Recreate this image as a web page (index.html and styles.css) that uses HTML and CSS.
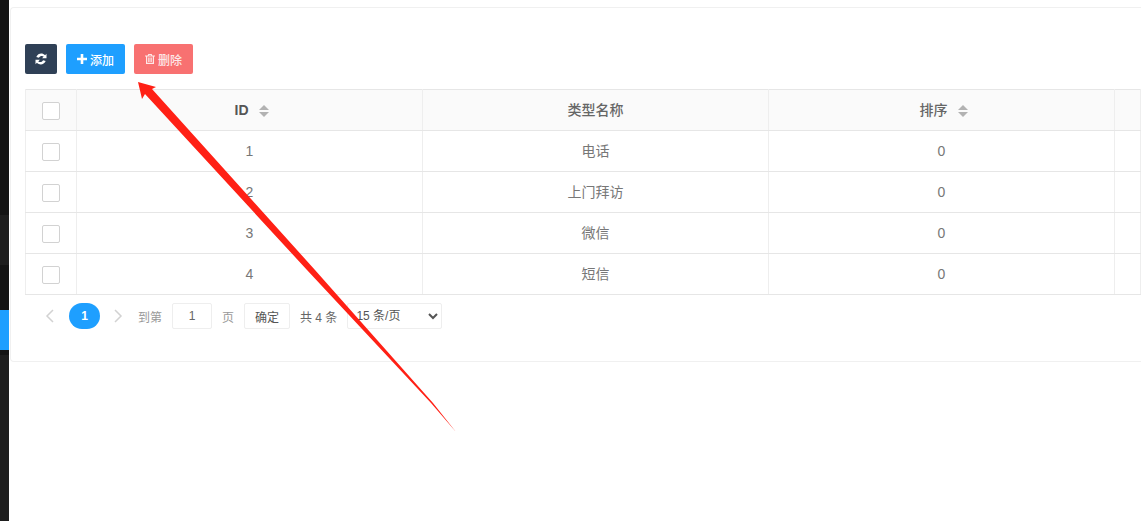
FILE: index.html
```html
<!doctype html>
<html lang="zh-CN">
<head>
  <meta charset="UTF-8" />
  <title>类型管理</title>
  <link rel="stylesheet" href="styles.css">
</head>
<body>
  <div class="sidebar">
    <div class="side-a"></div>
    <div class="side-b"></div>
    <div class="side-c"></div>
    <div class="side-active"></div>
    <div class="side-d"></div>
    <div class="side-e"></div>
  </div>

  <div class="main">
    <div class="panel">
      <div class="toolbar">
        <button class="btn btn-refresh">
          <svg class="icon-refresh" viewBox="0 0 12 12"><path d="M11.500 .8v4.400H7.100l1.600-1.600C7.300 2.500 5 2.800 3.900 4.800L1.300 3.900C3 .3 7.200-.6 10.100 2.200zM.5 11.200V6.800h4.400L3.300 8.400c1.400 1.100 3.700.8 4.800-1.200l2.600.9C9 11.700 4.800 12.600 1.900 9.800z"/></svg>
        </button>
        <button class="btn btn-add">
          <svg class="icon" viewBox="0 0 10 10"><path d="M3.700 0h2.600v3.700H10v2.600H6.300V10H3.700V6.300H0V3.700h3.700z"/></svg>添加
        </button>
        <button class="btn btn-del">
          <svg class="icon" viewBox="0 0 10 10"><path d="M3.300 0h3.400l.6 1.400H10v1.100H9V10H1V2.500H0V1.400h2.700zM4 .9l-.2.500h2.400L6 .9zM2.200 2.500v6.300h5.600V2.500zm1 1h.9V8h-.9zm1.350 0h.9V8h-.9zm1.350 0h.9V8h-.9z"/></svg>删除
        </button>
      </div>

      <table class="data-table">
        <colgroup>
          <col class="col-check"><col class="col-data"><col class="col-data"><col class="col-data"><col>
        </colgroup>
        <thead>
          <tr>
            <th><span class="check"></span></th>
            <th class="th-latin">ID<span class="sort"></span></th>
            <th>类型名称</th>
            <th>排序<span class="sort"></span></th>
            <th></th>
          </tr>
        </thead>
        <tbody>
          <tr><td><span class="check"></span></td><td>1</td><td>电话</td><td>0</td><td></td></tr>
          <tr><td><span class="check"></span></td><td>2</td><td>上门拜访</td><td>0</td><td></td></tr>
          <tr><td><span class="check"></span></td><td>3</td><td>微信</td><td>0</td><td></td></tr>
          <tr><td><span class="check"></span></td><td>4</td><td>短信</td><td>0</td><td></td></tr>
        </tbody>
      </table>

      <div class="pager">
        <svg class="pager-arrow" viewBox="0 0 9 14"><path d="M8 1 2 7l6 6"/></svg>
        <span class="page-current">1</span>
        <svg class="pager-arrow" viewBox="0 0 9 14"><path d="m1 1 6 6-6 6"/></svg>
        <span class="pager-label">到第</span>
        <input class="page-input" value="1">
        <span class="pager-label">页</span>
        <button class="page-go">确定</button>
        <span class="pager-total">共 4 条</span>
        <select class="page-size"><option>15 条/页</option></select>
      </div>
    </div>
  </div>

  <!-- annotation drawn over the screenshot -->
  <svg class="arrow" viewBox="0 0 1141 521"><polygon points="138,82 156,87 152,89 315,270 433,403 456,432 431,403 307,270 145,94 142,99"/></svg>
</body>
</html>
```

FILE: styles.css
```css
html, body {
  margin: 0;
  height: 521px;
  overflow: hidden;
}

body {
  position: relative;
  display: flex;
  background-color: #fff;
  color: #666;
  font-family: "Liberation Sans", "Noto Sans CJK SC", sans-serif;
  font-size: 14px;
}

.sidebar {
  width: 9px;
  flex-shrink: 0;
  display: flex;
  flex-direction: column;
}

.side-a { height: 215px; background-color: #141414; }
.side-b { height: 50px; background-color: #1e1e1e; }
.side-c { height: 45px; background-color: #141414; }
.side-active { height: 40px; background-color: #1e9fff; }
.side-d { height: 5px; background-color: #141414; }
.side-e { flex: 1; background-color: #1e1e1e; }

.main {
  flex: 1;
  min-width: 0;
  padding: 7px 0 0 1px;
}

.panel {
  height: 355px;
  box-sizing: border-box;
  padding: 36px 0 0 14px;
  border: 1px solid #f0f0f0;
  border-right: none;
  border-radius: 4px 0 0 4px;
}

.toolbar {
  display: flex;
  gap: 9px;
  margin-bottom: 15px;
}

.btn {
  height: 30px;
  width: 59px;
  padding: 0;
  display: flex;
  align-items: center;
  justify-content: center;
  gap: 3px;
  border: none;
  border-radius: 2px;
  color: #fff;
  font-family: inherit;
  font-size: 12px;
  font-weight: 500;
}

.btn-refresh { width: 32px; background-color: #2f4056; }
.btn-add { background-color: #1e9fff; }
.btn-del { background-color: #f87171; color: #fde8e8; }

.icon {
  width: 10px;
  height: 10px;
  fill: currentColor;
}

.icon-refresh {
  width: 12px;
  height: 12px;
  fill: #fff;
}

.data-table {
  width: 1116px;
  table-layout: fixed;
  border-collapse: collapse;
  border: 1px solid #e6e6e6;
  border-right: none;
}

.col-check { width: 51px; }
.col-data { width: 346px; }

.data-table th,
.data-table td {
  height: 40px;
  padding: 0;
  box-sizing: content-box;
  text-align: center;
  border: 1px solid #eee;
  border-bottom-color: #e6e6e6;
  border-top: none;
  font-size: 14px;
  line-height: 18px;
  color: #777;
}

.data-table th {
  background-color: #fafafa;
  color: #666;
  font-weight: 500;
}

.data-table .th-latin {
  color: #555;
  font-weight: bold;
}

.data-table td { font-weight: normal; }

.check {
  display: block;
  width: 16px;
  height: 16px;
  margin: 1px auto 0;
  border: 1px solid #d2d2d2;
  border-radius: 2px;
  background-color: #fff;
}

.sort {
  display: inline-block;
  position: relative;
  width: 10px;
  height: 12px;
  margin: 0 -4px 0 10px;
  vertical-align: -2px;
}

.sort::before,
.sort::after {
  content: "";
  position: absolute;
  left: 0;
  border-left: 5px solid transparent;
  border-right: 5px solid transparent;
}

.sort::before { top: 0; border-bottom: 5px solid #b2b2b2; }
.sort::after { bottom: 0; border-top: 5px solid #b2b2b2; }

.pager {
  display: flex;
  align-items: center;
  height: 26px;
  margin-top: 8px;
  padding-left: 20px;
  font-size: 12px;
  color: #999;
}

.pager-arrow {
  width: 9px;
  height: 14px;
  fill: none;
  stroke: #d2d2d2;
  stroke-width: 1.500;
}

.page-current {
  width: 31px;
  height: 26px;
  margin: 0 14px 0 15px;
  border-radius: 13px;
  background-color: #1e9fff;
  color: #fff;
  font-weight: bold;
  line-height: 26px;
  text-align: center;
}

.pager-label { margin: 0 10px 0 0; }
.pager-arrow + .pager-label { margin-left: 15px; }

.page-input {
  width: 40px;
  height: 26px;
  box-sizing: border-box;
  margin-right: 10px;
  padding: 0;
  border: 1px solid #eee;
  border-radius: 2px;
  color: #666;
  font-family: inherit;
  font-size: 12px;
  text-align: center;
}

.page-go {
  width: 46px;
  height: 26px;
  margin-right: 10px;
  padding: 0;
  border: 1px solid #eee;
  border-radius: 2px;
  background-color: #fff;
  color: #555;
  font-family: inherit;
  font-size: 12px;
}

.pager-total {
  margin-right: 10px;
  color: #666;
}

.page-size {
  width: 95px;
  height: 26px;
  padding-left: 4px;
  border: 1px solid #eee;
  border-radius: 2px;
  background-color: #fff;
  color: #555;
  font-family: inherit;
  font-size: 12px;
}

.arrow {
  position: absolute;
  left: 0;
  top: 0;
  width: 1141px;
  height: 521px;
  fill: #ff2015;
  pointer-events: none;
}
```
